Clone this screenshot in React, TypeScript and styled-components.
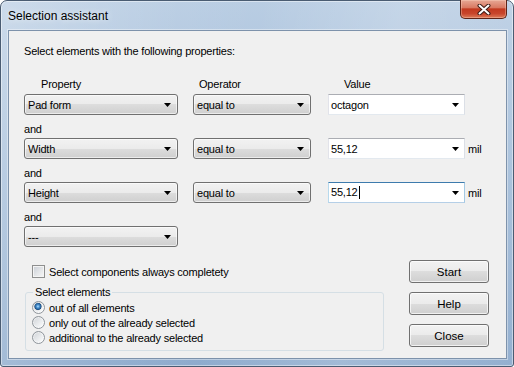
import React from 'react';
import styled, {createGlobalStyle} from 'styled-components';

const GlobalStyle = createGlobalStyle`
	html, body {
		margin: 0;
		padding: 0;
		background: #fff;
	}
	body {
		font-family: "Liberation Sans", Arial, sans-serif;
		font-size: 11px;
		letter-spacing: -0.2px;
		color: #000;
	}
`;

const Window = styled.div`
	box-sizing: border-box;
	width: 514px;
	height: 367px;
	display: flex;
	flex-direction: column;
	padding: 0 6px 7px 7px;
	border: 1px solid #4a5c72;
	border-radius: 7px 7px 3px 3px;
	box-shadow: inset 0 0 0 1px rgba(255, 255, 255, 0.45);
	background:
		linear-gradient(100deg, rgba(255, 255, 255, 0.28) 0%, rgba(255, 255, 255, 0.05) 30%, rgba(255, 255, 255, 0) 45%, rgba(255, 255, 255, 0.18) 70%, rgba(255, 255, 255, 0.05) 100%),
		linear-gradient(180deg, #b9cde3 0%, #a7c0db 40%, #8eabcd 100%);
`;

const TitleBar = styled.div`
	height: 29px;
	display: flex;
	align-items: flex-start;
	justify-content: space-between;
`;

const Title = styled.div`
	margin-top: 8px;
	font-size: 12px;
	line-height: 14px;
	letter-spacing: 0;
	color: #000;
	text-shadow: 0 0 6px rgba(255, 255, 255, 0.9);
`;

const CloseButton = styled.div`
	box-sizing: border-box;
	width: 47px;
	height: 19px;
	margin-top: -1px;
	display: flex;
	align-items: center;
	justify-content: center;
	border: 1px solid #5e2418;
	border-top: none;
	border-radius: 0 0 5px 5px;
	box-shadow: inset 0 0 0 1px rgba(255, 220, 200, 0.35);
	background: linear-gradient(180deg, #e7a895 0%, #d97a63 42%, #c2391f 50%, #c8452b 75%, #dd7a58 100%);
`;

const Client = styled.div`
	flex: 1;
	box-sizing: border-box;
	border: 1px solid #7d92ab;
	box-shadow: 0 0 0 1px rgba(255, 255, 255, 0.4);
	background: #f0f0f0;
	padding: 14px 15px 0 15px;
	display: flex;
	flex-direction: column;
`;

const Line = styled.div`
	height: 13px;
	line-height: 13px;
	white-space: nowrap;
`;

const HeaderRow = styled.div`
	display: flex;
	margin-top: 20px;
	margin-bottom: 3px;
`;

const Column = styled.div<{$w?: number; $ml?: number; $indent?: number}>`
	box-sizing: border-box;
	flex: none;
	width: ${(p) => (p.$w ? `${p.$w}px` : 'auto')};
	margin-left: ${(p) => p.$ml ?? 0}px;
	padding-left: ${(p) => p.$indent ?? 0}px;
	height: 13px;
	line-height: 13px;
	white-space: nowrap;
`;

const AndLabel = styled(Line)`
	margin-top: 8px;
	margin-bottom: 2px;
`;

const ConditionRow = styled.div`
	display: flex;
	align-items: center;
	height: 21px;
`;

const ComboBox = styled.div<{$w: number; $ml?: number}>`
	box-sizing: border-box;
	width: ${(p) => p.$w}px;
	height: 21px;
	margin-left: ${(p) => p.$ml ?? 0}px;
	display: flex;
	align-items: center;
	justify-content: space-between;
	padding: 0 6px 0 3px;
	border: 1px solid #707070;
	border-radius: 3px;
	box-shadow: inset 0 0 0 1px rgba(255, 255, 255, 0.6);
	background: linear-gradient(180deg, #f2f2f2 0%, #ebebeb 50%, #dddddd 50%, #cfcfcf 100%);
	white-space: nowrap;
`;

const EditCombo = styled.div<{$focused?: boolean}>`
	box-sizing: border-box;
	width: 137px;
	height: 21px;
	margin-left: 17px;
	display: flex;
	align-items: center;
	justify-content: space-between;
	padding: 0 5px 0 2px;
	border: 1px solid;
	border-color: ${(p) => (p.$focused ? '#3d7bad #a4c9e3 #b5cfe7 #b7d9ed' : '#abadb3 #dbdfe6 #e3e9ef #e2e3ea')};
	background: #fff;
	white-space: nowrap;
`;

const Caret = styled.span`
	display: inline-block;
	width: 1px;
	height: 13px;
	background: #000;
	vertical-align: middle;
	margin-left: 1px;
`;

const Unit = styled.span`
	margin-left: 3px;
`;

const Footer = styled.div`
	display: flex;
`;

const Options = styled.div`
	width: 360px;
	display: flex;
	flex-direction: column;
`;

const CheckRow = styled.label`
	display: flex;
	align-items: center;
	gap: 4px;
	height: 13px;
	margin: 18px 0 0 8px;
	white-space: nowrap;
`;

const CheckBox = styled.span`
	box-sizing: border-box;
	flex: none;
	width: 13px;
	height: 13px;
	border: 1px solid #8e8f8f;
	box-shadow: inset 0 0 0 1px #f4f4f4;
	background: linear-gradient(135deg, #c9ced5 0%, #e4e6e9 55%, #f7f7f7 100%);
`;

const Group = styled.fieldset`
	margin: 8px 0 0 1px;
	width: 359px;
	box-sizing: border-box;
	padding: 1px 0 5px 6px;
	border: 1px solid #d5dfe5;
	border-radius: 3px;
`;

const Legend = styled.legend`
	padding: 0 2px;
	margin-left: 1px;
	line-height: 13px;
	font-size: 11px;
`;

const RadioRow = styled.label`
	display: flex;
	align-items: center;
	gap: 4px;
	height: 15px;
	white-space: nowrap;
`;

const Radio = styled.span<{$checked?: boolean}>`
	box-sizing: border-box;
	flex: none;
	width: 13px;
	height: 13px;
	border-radius: 50%;
	border: 1px solid #8f959b;
	background: ${(p) =>
		p.$checked
			? 'radial-gradient(circle at 45% 40%, #b6e0ff 0, #4a93d2 1.5px, #1a4f86 3.3px, rgba(0,0,0,0.15) 3.8px, rgba(0,0,0,0) 4.2px), linear-gradient(135deg, #cfd2d6 0%, #eceef0 60%, #fff 100%)'
			: 'linear-gradient(135deg, #cfd2d6 0%, #eceef0 60%, #fff 100%)'};
	box-shadow: inset 0 0 0 1px rgba(255, 255, 255, 0.5);
`;

const Buttons = styled.div`
	margin: 13px 0 0 25px;
	display: flex;
	flex-direction: column;
	gap: 9px;
`;

const Button = styled.button`
	box-sizing: border-box;
	width: 80px;
	height: 23px;
	padding: 0;
	font-family: inherit;
	font-size: 11.5px;
	letter-spacing: 0;
	color: #000;
	border: 1px solid #707070;
	border-radius: 3px;
	box-shadow: inset 0 0 0 1px rgba(255, 255, 255, 0.7);
	background: linear-gradient(180deg, #f2f2f2 0%, #ebebeb 50%, #dddddd 50%, #cfcfcf 100%);
`;

const Arrow = () => (
	<svg width="7" height="4" viewBox="0 0 7 4">
		<path d="M0 0h7L3.5 4z" fill="#000" />
	</svg>
);

type Condition = {
	property: string;
	operator?: string;
	value?: string;
	unit?: string;
	focused?: boolean;
};

const conditions: Condition[] = [
	{property: 'Pad form', operator: 'equal to', value: 'octagon'},
	{property: 'Width', operator: 'equal to', value: '55,12', unit: 'mil'},
	{property: 'Height', operator: 'equal to', value: '55,12', unit: 'mil', focused: true},
	{property: '---'}
];

const options = ['out of all elements', 'only out of the already selected', 'additional to the already selected'];

const App = () => {
	return (
		<>
			<GlobalStyle />
			<Window>
				<TitleBar>
					<Title>Selection assistant</Title>
					<CloseButton>
						<svg width="14" height="11" viewBox="0 0 14 11">
							<path d="M2.5 1.5l9 8M11.5 1.5l-9 8" stroke="#3b1a14" strokeWidth="4" strokeLinecap="round" />
							<path d="M2.5 1.5l9 8M11.5 1.5l-9 8" stroke="#fff" strokeWidth="2" strokeLinecap="round" />
						</svg>
					</CloseButton>
				</TitleBar>
				<Client>
					<Line>Select elements with the following properties:</Line>
					<HeaderRow>
						<Column $w={154} $indent={17}>Property</Column>
						<Column $w={118} $ml={15} $indent={6}>Operator</Column>
						<Column $w={137} $ml={17} $indent={16}>Value</Column>
					</HeaderRow>
					{conditions.map((c, i) => (
						<React.Fragment key={i}>
							{i > 0 && <AndLabel>and</AndLabel>}
							<ConditionRow>
								<ComboBox $w={154}>
									<span>{c.property}</span>
									<Arrow />
								</ComboBox>
								{c.operator && (
									<ComboBox $w={118} $ml={15}>
										<span>{c.operator}</span>
										<Arrow />
									</ComboBox>
								)}
								{c.value && (
									<EditCombo $focused={c.focused}>
										<span>
											{c.value}
											{c.focused && <Caret />}
										</span>
										<Arrow />
									</EditCombo>
								)}
								{c.unit && <Unit>{c.unit}</Unit>}
							</ConditionRow>
						</React.Fragment>
					))}
					<Footer>
						<Options>
							<CheckRow>
								<CheckBox />
								<span>Select components always completety</span>
							</CheckRow>
							<Group>
								<Legend>Select elements</Legend>
								{options.map((o, i) => (
									<RadioRow key={o}>
										<Radio $checked={i === 0} />
										<span>{o}</span>
									</RadioRow>
								))}
							</Group>
						</Options>
						<Buttons>
							<Button>Start</Button>
							<Button>Help</Button>
							<Button>Close</Button>
						</Buttons>
					</Footer>
				</Client>
			</Window>
		</>
	);
};

export default App;
